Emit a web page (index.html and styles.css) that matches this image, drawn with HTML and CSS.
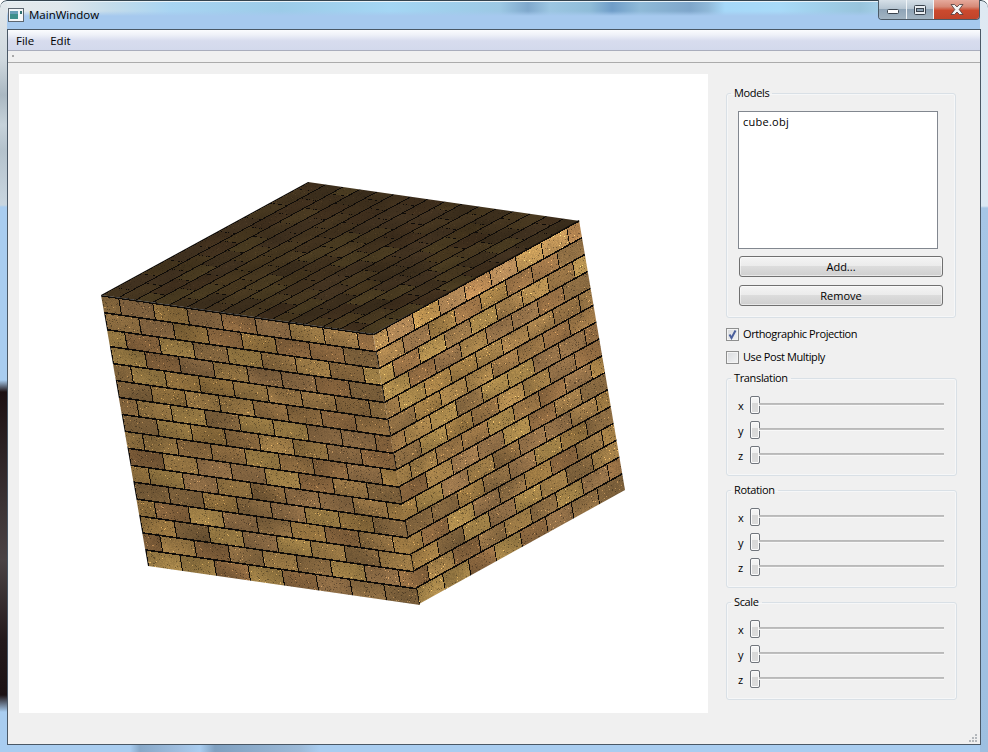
FILE: index.html
```html
<!DOCTYPE html>
<html lang="en">
<head>
<meta charset="utf-8">
<title>MainWindow</title>
<link rel="stylesheet" href="styles.css">
</head>
<body>
<div class="frame">
  <header class="titlebar">
    <svg class="app-icon" width="16" height="14" viewBox="0 0 16 14">
      <rect x="0.5" y="0.5" width="15" height="13" fill="#f4f6f8" stroke="#5c6670"/>
      <rect x="2" y="3" width="8" height="8" fill="#3f8f8c"/>
      <rect x="2" y="3" width="8" height="3" fill="#6a9fb8"/>
      <rect x="12" y="3" width="2" height="3" fill="#2f6f70"/>
    </svg>
    <span class="title-text">MainWindow</span>
    <div class="caption">
      <div class="cap cap-min">
        <svg width="12" height="6" viewBox="0 0 12 6"><rect x="0.5" y="0.5" width="11" height="4" rx="1" fill="#fff" stroke="#39424c"/></svg>
      </div>
      <div class="cap cap-max">
        <svg width="12" height="10" viewBox="0 0 12 10"><rect x="0.5" y="0.5" width="11" height="9" rx="1" fill="#e9eef2" stroke="#39424c"/><rect x="2.5" y="3.5" width="7" height="3" fill="#8aa0b2" stroke="#39424c"/></svg>
      </div>
      <div class="cap cap-close">
        <svg width="14" height="11" viewBox="0 0 14 11"><path d="M1 .5H4.5L7 3 9.5.5H13L9.2 5.500 13 10.500H9.500L7 8 4.500 10.500H1L4.800 5.500Z" fill="#f4f4f4" stroke="#4a3a3a" stroke-width=".8"/></svg>
      </div>
    </div>
  </header>

  <div class="window">
    <nav class="menubar">
      <span class="menu-item">File</span>
      <span class="menu-item">Edit</span>
    </nav>
    <div class="toolbar"><span class="grip"></span></div>

    <main class="content">
      <canvas class="viewport" id="viewport" width="689" height="639"></canvas>

      <aside class="side">
        <fieldset class="group group-models">
          <legend>Models</legend>
          <div class="listbox">cube.obj</div>
          <button class="btn" type="button">Add...</button>
          <button class="btn" type="button">Remove</button>
        </fieldset>

        <div class="check-row">
          <span class="check">
            <svg width="11" height="11" viewBox="0 0 11 11"><path d="M2.500 5.500L4.500 9 8.500 1.500" fill="none" stroke="#4a5f9c" stroke-width="2"/></svg>
          </span>
          <span class="check-label">Orthographic Projection</span>
        </div>
        <div class="check-row">
          <span class="check"></span>
          <span class="check-label">Use Post Multiply</span>
        </div>

        <fieldset class="group group-sliders">
          <legend>Translation</legend>
          <div class="slider-row"><span class="axis">x</span><span class="handle"></span><span class="track"></span></div>
          <div class="slider-row"><span class="axis">y</span><span class="handle"></span><span class="track"></span></div>
          <div class="slider-row"><span class="axis">z</span><span class="handle"></span><span class="track"></span></div>
        </fieldset>

        <fieldset class="group group-sliders">
          <legend>Rotation</legend>
          <div class="slider-row"><span class="axis">x</span><span class="handle"></span><span class="track"></span></div>
          <div class="slider-row"><span class="axis">y</span><span class="handle"></span><span class="track"></span></div>
          <div class="slider-row"><span class="axis">z</span><span class="handle"></span><span class="track"></span></div>
        </fieldset>

        <fieldset class="group group-sliders">
          <legend>Scale</legend>
          <div class="slider-row"><span class="axis">x</span><span class="handle"></span><span class="track"></span></div>
          <div class="slider-row"><span class="axis">y</span><span class="handle"></span><span class="track"></span></div>
          <div class="slider-row"><span class="axis">z</span><span class="handle"></span><span class="track"></span></div>
        </fieldset>
      </aside>

      <svg class="size-grip" width="8" height="8" viewBox="0 0 8 8">
        <g fill="#b4b8bc">
          <rect x="6" y="0" width="2" height="2"/>
          <rect x="3" y="3" width="2" height="2"/><rect x="6" y="3" width="2" height="2"/>
          <rect x="0" y="6" width="2" height="2"/><rect x="3" y="6" width="2" height="2"/><rect x="6" y="6" width="2" height="2"/>
        </g>
      </svg>
    </main>
  </div>
</div>
<script src="app.js"></script>
</body>
</html>
```

FILE: styles.css
```css
* { box-sizing: border-box; }

html, body {
  margin: 0;
  height: 100%;
  overflow: hidden;
  background: #fff;
}

.frame {
  width: 988px;
  height: 752px;
  display: flex;
  flex-direction: column;
  padding: 0 7px 7px 7px;
  border-radius: 7px 7px 0 0;
  font-family: "Open Sans", "Noto Sans", sans-serif;
  font-size: 11px;
  color: #000;
  box-shadow: inset 0 1px 0 #34434e, inset 0 2px 0 #e8f2f8;
  background:
    linear-gradient(to bottom, #e4e9ec 0, #cfd8de 60px, #aab8c2 95px, #c6d2da 125px, #b4c2cc 150px, #c9d6e0 205px, #a9cdf0 207px, #a9cdf0 380px, #1c1012 392px, #2c2224 450px, #4a4244 560px, #241a1c 640px, #1c1214 695px, #a9cdf0 712px, #a9cdf0 100%) left top / 7px 100% no-repeat,
    linear-gradient(to bottom, #dfe9f2 0, #dbe8f3 206px, #a6c6e6 208px, #9dbfe0 100%) right top / 8px 100% no-repeat,
    linear-gradient(90deg, #a9cdf0 0, #a9cdf0 130px, #87a8c8 140px, #a0bfe0 180px, #a9cdf0 200px, #7fa0c0 215px, #9cbad8 300px, #a9cdf0 320px, #a9cdf0 100%) left bottom / 100% 7px no-repeat,
    linear-gradient(to bottom, rgba(168,212,240,0) 11px, #a6c9ee 16px) left top / 100% 29px no-repeat,
    linear-gradient(90deg, #e6ebee 0, #dfe7ec 60px, #c4dceb 110px, #a8d4f2 170px, #9ccbe8 280px, #a4d6f4 390px, #9cc8e4 500px, #7fa8cc 528px, #9cc6e2 550px, #8fbcd8 590px, #6f9dc8 612px, #8fbad8 640px, #7ea6ca 690px, #8fb8d8 708px, #a6d8f8 725px, #a8daf8 780px, #98c4dc 860px, #a4cfe8 880px) left top / 100% 29px no-repeat,
    #a9cbee;
}

/* Title bar */
.titlebar {
  height: 29px;
  flex: none;
  display: flex;
  align-items: flex-start;
}

.app-icon {
  margin: 8px 0 0 1px;
  flex: none;
}

.title-text {
  margin: 6px 0 0 5px;
  font-size: 11.5px;
  line-height: 18px;
}

.caption {
  margin-left: auto;
  margin-right: 1px;
  display: flex;
  height: 20px;
  border: 1px solid #4c5a66;
  border-top: 0;
  border-radius: 0 0 4px 4px;
  overflow: hidden;
}

.cap {
  display: flex;
  align-items: center;
  justify-content: center;
  height: 100%;
  background: linear-gradient(to bottom, #d6e0e8 0, #b7c6d2 45%, #8fa4b6 50%, #a2b4c2 100%);
  border-right: 1px solid #f0f4f7;
}

.cap-min { width: 28px; padding-top: 5px; }
.cap-max { width: 27px; }
.cap-close {
  width: 45px;
  border-right: 0;
  background: linear-gradient(to bottom, #e6aa9c 0, #d68a78 35%, #cb4a2e 55%, #c0442a 100%);
}

/* Client window */
.window {
  flex: 1;
  min-height: 0;
  display: flex;
  flex-direction: column;
  border: 1px solid #4a5866;
  background: #f0f0f0;
}

.menubar {
  height: 21px;
  flex: none;
  display: flex;
  align-items: center;
  gap: 16px;
  padding: 0 0 0 8px;
  font-size: 11.5px;
  background: linear-gradient(to bottom, #fbfcfe 0, #eef1f8 25%, #d7dcee 55%, #d3d9ec 100%);
  border-bottom: 1px solid #a9adbc;
}

.toolbar {
  height: 12px;
  flex: none;
  background: #f0f0f0;
  border-bottom: 1px solid #ababab;
  padding: 4px 0 0 4px;
}

.grip {
  display: block;
  width: 2px;
  height: 2px;
  background: #a8a8a8;
}

.content {
  flex: 1;
  min-height: 0;
  display: flex;
  padding: 11px 0 0 11px;
  position: relative;
}

.viewport {
  display: block;
  width: 689px;
  height: 639px;
  flex: none;
  background: #fff;
}

.side {
  width: 231px;
  margin-left: 18px;
  padding-top: 11px;
  display: flex;
  flex-direction: column;
  flex: none;
}

.group {
  margin: 0;
  padding: 0;
  min-width: 0;
  border: 1px solid #d9e0e6;
  border-radius: 3px;
  box-shadow: inset 0 0 0 1px #f6f7f8;
}

.group legend {
  margin-left: -7px;
  padding: 0 3px;
  font-size: 11px;
  line-height: 16px;
  letter-spacing: -0.35px;
}

.group-models {
  width: 230px;
  height: 233px;
  padding: 10px 0 0 11px;
  display: flex;
  flex-direction: column;
}

.listbox {
  width: 200px;
  height: 138px;
  border: 1px solid #82878f;
  background: #fff;
  padding: 2px 4px;
  font-size: 11px;
  line-height: 16px;
  letter-spacing: 0.25px;
}

.btn {
  display: block;
  width: 204px;
  height: 21px;
  margin: 7px 0 1px 1px;
  padding: 0;
  border: 1px solid #707070;
  border-radius: 3px;
  font: inherit;
  color: #000;
  background: linear-gradient(to bottom, #f4f4f4 0, #ebebeb 47%, #dcdcdc 50%, #cfcfcf 100%);
  box-shadow: inset 0 0 0 1px rgba(255, 255, 255, .5);
}

.check-row {
  display: flex;
  align-items: center;
  gap: 4px;
  height: 16px;
  margin-top: 8px;
  line-height: 16px;
}

.check-row + .check-row {
  margin-top: 7px;
}

.check-label {
  letter-spacing: -0.4px;
}

.check {
  width: 13px;
  height: 13px;
  flex: none;
  display: flex;
  align-items: center;
  justify-content: center;
  border: 1px solid #8e8f8f;
  background: linear-gradient(135deg, #d9dbde, #f2f3f4);
  box-shadow: inset 0 0 0 1px #f4f4f4;
}

.group-sliders {
  width: 231px;
  height: 106px;
  padding: 10px 12px 0 11px;
  margin-top: 6px;
}

.check-row + .group-sliders {
  margin-top: 5px;
}

.slider-row {
  display: flex;
  align-items: flex-start;
  height: 18px;
  margin-bottom: 7px;
}

.axis {
  width: 12px;
  flex: none;
  font-size: 11px;
  line-height: 16px;
  padding-top: 2px;
}

.handle {
  width: 10px;
  height: 18px;
  flex: none;
  border: 1px solid #70757c;
  border-radius: 2px;
  background: linear-gradient(to bottom, #f6f6f6 0, #f0f0f0 35%, #d8d8d8 38%, #dcdcdc 100%);
  box-shadow: inset 0 0 0 1px #fbfbfb;
}

.track {
  flex: 1;
  height: 3px;
  margin-left: -1px;
  margin-top: 7px;
  background: linear-gradient(to bottom, #b6b6b6 0, #c2c2c2 66%, #f8f8f8 66%);
}

.size-grip {
  position: absolute;
  right: 3px;
  bottom: 2px;
}
```

FILE: app.js
```js
(function () {
  var seed = 12345;
  function rnd() {
    seed = (seed * 1664525 + 1013904223) >>> 0;
    return seed / 4294967296;
  }

  var SIZE = 512, ROWS = 16, COLS = 8;
  var palette = [
    [158, 122, 72], [150, 114, 68], [166, 130, 74], [146, 108, 66],
    [160, 124, 68], [140, 108, 66], [172, 138, 76], [152, 116, 74]
  ];

  // brick colours, one per brick, shared by the faces
  var bricks = [];
  for (var r = 0; r < ROWS; r++) {
    var row = [];
    for (var c = 0; c < COLS + 1; c++) {
      row.push({
        col: palette[Math.floor(rnd() * palette.length)],
        k: 0.94 + rnd() * 0.12,
        dx: (rnd() - 0.5) * 0.35,
        dy: (rnd() - 0.5) * 0.35
      });
    }
    bricks.push(row);
  }

  // soft lighting patches, as on the photographed wall
  function blotch(u, v) {
    return 1 + 0.05 * Math.sin(u * 17 + v * 5) * Math.cos(v * 11 - u * 3) + 0.03 * Math.sin(u * 41 + 1) * Math.sin(v * 37);
  }

  function texture(shade, joint, contrast) {
    var cv = document.createElement("canvas");
    cv.width = cv.height = SIZE;
    var cx = cv.getContext("2d");
    var img = cx.createImageData(SIZE, SIZE);
    var d = img.data;
    var rh = SIZE / ROWS, bw = SIZE / COLS;
    for (var y = 0; y < SIZE; y++) {
      var rowI = Math.floor(y / rh);
      var offs = rowI % 2 === 0 ? bw / 2 : 0;
      var fy = y - rowI * rh;
      for (var x = 0; x < SIZE; x++) {
        var xx = x + offs;
        var colI = Math.floor(xx / bw);
        var fx = xx - colI * bw;
        var b = bricks[rowI][colI % (COLS + 1)];
        var u = fx / bw - 0.5, v = fy / rh - 0.5;
        var grad = 1 + (u * b.dx + v * b.dy);
        var n = rnd();
        var speck = n < 0.012 ? 1.5 : n < 0.06 ? 0.68 : 0.93 + rnd() * 0.14;
        var f = shade(x / SIZE, y / SIZE) * blotch(x / SIZE, y / SIZE) *
          (1 + (b.k * grad - 1) * contrast) * (1 + (speck - 1) * contrast);
        var i = (y * SIZE + x) * 4;
        var isJoint = fy < joint.h || fx < joint.w;
        if (isJoint && (fy < joint.h || rnd() > joint.gap)) {
          d[i] = 14; d[i + 1] = 11; d[i + 2] = 8;
        } else {
          d[i] = Math.min(255, b.col[0] * f);
          d[i + 1] = Math.min(255, b.col[1] * f);
          d[i + 2] = Math.min(255, b.col[2] * f);
        }
        d[i + 3] = 255;
      }
    }
    cx.putImageData(img, 0, 0);
    return cv;
  }

  var ctx = document.getElementById("viewport").getContext("2d");
  ctx.fillStyle = "#fff";
  ctx.fillRect(0, 0, 689, 639);
  ctx.imageSmoothingEnabled = false;

  // viewport origin in window pixels
  var OX = 19, OY = 74;

  function face(tex, o, a, b) {
    ctx.save();
    ctx.setTransform(a[0] / SIZE, a[1] / SIZE, b[0] / SIZE, b[1] / SIZE, o[0] - OX, o[1] - OY);
    ctx.drawImage(tex, 0, 0);
    ctx.restore();
  }

  // left face: brown, a little darker at the top left; lit along the top near the corner
  var left = texture(function (u, v) {
    var s = 0.82 + 0.06 * u + 0.04 * v;
    if (v < 0.065 && u > 0.7) s += 0.45 * (u - 0.7);
    return s;
  }, { h: 3, w: 2, gap: 0 }, 1);

  // right face: lit, with a bright band along the top row
  var right = texture(function (u, v) {
    var s = 1.04 + 0.02 * u - 0.12 * v;
    if (v < 0.065) s += 0.16;
    return s;
  }, { h: 3, w: 2, gap: 0 }, 1);

  // top face: the same wall seen in deep shade, low contrast
  var top = texture(function () {
    return 0.42;
  }, { h: 3, w: 2, gap: 0.4 }, 0.4);

  face(top, [101, 295], [207, -113], [272, 39]);
  face(left, [101, 295], [272, 39], [47, 271]);
  face(right, [373, 334], [206, -114], [46, 270]);
})();
```
